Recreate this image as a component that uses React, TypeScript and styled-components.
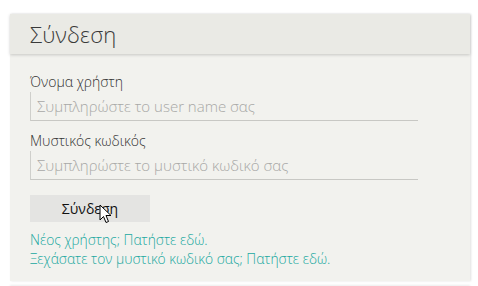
import React from "react";
import styled, { createGlobalStyle } from "styled-components";

const Global = createGlobalStyle`
  html, body { margin: 0; padding: 0; background: #ffffff; }
  body { font-family: "Open Sans", "Noto Sans", sans-serif; overflow: hidden; }
`;

const Page = styled.div`
  padding: 14px 8px 0 10px;
  width: 460px;
  display: flex;
  flex-direction: column;
  gap: 5px;
`;

const Panel = styled.section`
  background: #f2f2ee;
  box-shadow: 1px 0 2px rgba(0, 0, 0, 0.12);
`;

const Header = styled.div`
  height: 40px;
  background: #eaeae5;
  box-shadow: 0 1px 3px rgba(0, 0, 0, 0.18);
  display: flex;
  align-items: center;
  padding: 0 20px;
  position: relative;
`;

const Title = styled.h1`
  margin: 0;
  font-size: 22px;
  font-weight: 300;
  color: #3a3a3a;
  letter-spacing: 0.2px;
`;

const Body = styled.div`
  padding: 19px 20px 13px 20px;
  display: flex;
  flex-direction: column;
`;

const Field = styled.label`
  display: flex;
  flex-direction: column;
  margin-bottom: 11px;
`;

const Label = styled.span`
  font-size: 14px;
  font-weight: 300;
  color: #333;
  line-height: 18px;
  margin-bottom: 1px;
`;

const Input = styled.input`
  width: 388px;
  height: 29px;
  box-sizing: border-box;
  border: none;
  border-left: 1px solid #cfcfcb;
  border-bottom: 1px solid #c8c8c4;
  background: transparent;
  padding: 0 6px;
  font-family: inherit;
  font-size: 15px;
  font-weight: 300;
  color: #333;
  outline: none;
  &::placeholder { color: #a8a8a6; }
`;

const Button = styled.button`
  margin-top: 4px;
  width: 120px;
  height: 27px;
  border: none;
  background: #e4e4e2;
  font-family: inherit;
  font-size: 14px;
  font-weight: 400;
  color: #111;
  padding: 0;
  position: relative;
  cursor: pointer;
`;

const Cursor = styled.svg`
  position: absolute;
  left: 69px;
  top: 9px;
`;

const Links = styled.div`
  margin-top: 8px;
  display: flex;
  flex-direction: column;
`;

const Link = styled.a`
  font-size: 13.8px;
  font-weight: 300;
  color: #20a8a0;
  line-height: 19px;
  text-decoration: none;
`;

const Header2 = styled.div`
  height: 10px;
  background: #eaeae5;
  box-shadow: 0 -1px 2px rgba(0, 0, 0, 0.08);
`;

export default function App() {
  return (
    <>
      <Global />
      <Page>
        <Panel>
          <Header>
            <Title>Σύνδεση</Title>
          </Header>
          <Body>
            <Field>
              <Label>Όνομα χρήστη</Label>
              <Input placeholder="Συμπληρώστε το user name σας" />
            </Field>
            <Field>
              <Label>Μυστικός κωδικός</Label>
              <Input type="password" placeholder="Συμπληρώστε το μυστικό κωδικό σας" />
            </Field>
            <div>
              <Button>
                Σύνδεση
                <Cursor width="13" height="20" viewBox="0 0 13 20">
                  <path d="M1 1 L1 16 L4.5 12.5 L7 18.5 L9.5 17.5 L7 11.5 L12 11.5 Z" fill="#fff" stroke="#000" strokeWidth="1" strokeLinejoin="round" />
                </Cursor>
              </Button>
            </div>
            <Links>
              <Link href="#">Νέος χρήστης; Πατήστε εδώ.</Link>
              <Link href="#">Ξεχάσατε τον μυστικό κωδικό σας; Πατήστε εδώ.</Link>
            </Links>
          </Body>
        </Panel>
        <Header2 />
      </Page>
    </>
  );
}
